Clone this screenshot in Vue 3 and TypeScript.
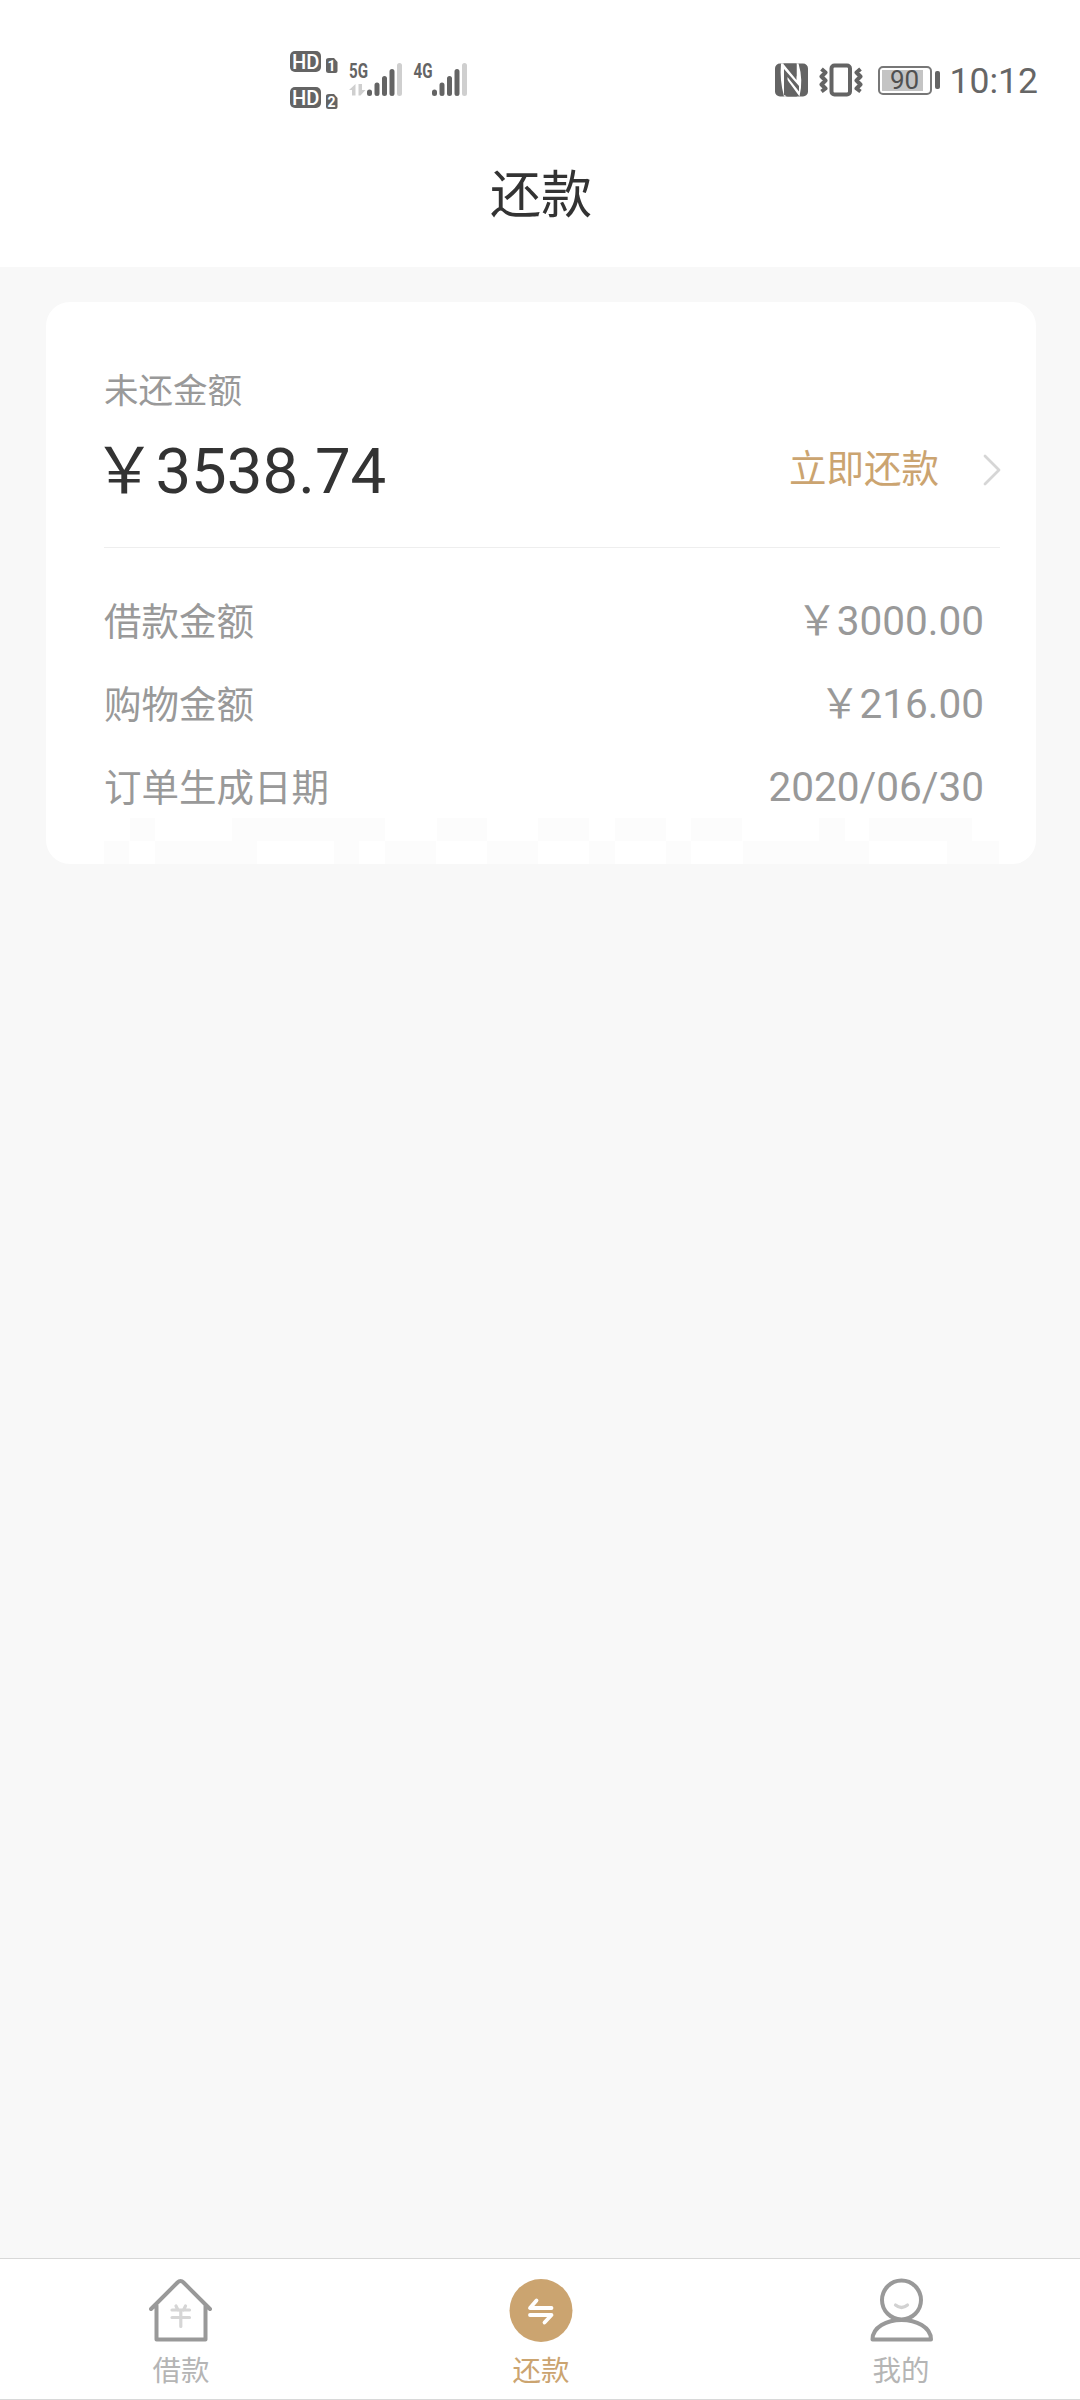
<script setup lang="ts">
interface Row { label: string; value: string; money: boolean }

const rows: Row[] = [
  { label: '借款金额', value: '3000.00', money: true },
  { label: '购物金额', value: '216.00', money: true },
  { label: '订单生成日期', value: '2020/06/30', money: false },
]

// faint mosaic cells: [x, row, width], relative to the mosaic strip
const tiles: number[][] = [
  [26, 0, 25], [128, 0, 153], [333, 0, 50], [434, 0, 51], [511, 0, 51], [587, 0, 51], [715, 0, 26], [765, 0, 103],
  [0, 1, 25], [51, 1, 102], [230, 1, 25], [281, 1, 51], [383, 1, 51], [485, 1, 26], [562, 1, 25], [639, 1, 126], [843, 1, 52],
]
</script>

<template>
  <div class="screen">
    <header class="top">
      <div class="status">
        <svg class="net" width="200" height="80" viewBox="0 0 200 80">
          <g fill="#646464">
            <rect x="0" y="11" width="31" height="21" rx="5" />
            <rect x="0" y="47" width="31" height="21" rx="5" />
            <path d="M39 18h5l3.500 4v9q0 2-2 2h-7q-2.500 0-2.500-2V20q0-2 3-2z" />
            <path d="M39 54h5l3.500 4v9q0 2-2 2h-7q-2.500 0-2.500-2V56q0-2 3-2z" />
          </g>
          <g fill="#fff" font-family="Roboto, sans-serif" font-weight="500">
            <text x="2" y="28.500" font-size="20" textLength="27.500" lengthAdjust="spacingAndGlyphs">HD</text>
            <text x="2" y="64.500" font-size="20" textLength="27.500" lengthAdjust="spacingAndGlyphs">HD</text>
            <text x="37.500" y="31" font-size="14" font-weight="700">1</text>
            <text x="37.500" y="67" font-size="14" font-weight="700">2</text>
          </g>
          <g fill="#646464" font-family="Roboto, sans-serif" font-weight="700" font-size="20">
            <text x="59" y="37.500" textLength="19" lengthAdjust="spacingAndGlyphs">5G</text>
            <text x="123.500" y="37.500" textLength="19" lengthAdjust="spacingAndGlyphs">4G</text>
          </g>
          <path d="M65.500 44v11.500h-3.500V50h-3zM68.500 44H72v6h3.500l-5 5.500h-2z" fill="#cfcfcf" />
          <g stroke-width="5" stroke-linecap="round">
            <path d="M79.500 52v1.500M87 45v8.500M94.500 38.500v15M102 31.500v22M144.500 52v1.500M152 45v8.500M159.500 38.500v15M167 31.500v22" stroke="#646464" />
            <path d="M109.500 25.500v28M174.500 25.500v28" stroke="#cfcfcf" />
          </g>
        </svg>
        <div class="system">
          <svg width="88" height="34" viewBox="0 0 88 34">
            <rect x="0" y="0.500" width="33" height="33" rx="5" fill="#646464" />
            <path d="M6 0.500Q4.500 17 9 33.500H11V15L24.500 33.500Q28.500 17 23.500 0.500H21.500V17L8 0.500Z" fill="#fff" />
            <path d="M8.500 0.500H21.500V13.500L8.500 0.500M9 6L24 23V28.500L12.500 14V33.500L9 32Z" fill="#646464" />
            <path d="M12.500 20.500V33.500H22Z" fill="#646464" />
            <rect x="56.500" y="2.500" width="18.500" height="29" rx="3" fill="none" stroke="#646464" stroke-width="4" />
            <path d="M46.500 6l4 3.500-4 4 4 4-4 4 4 4-4 3M85.500 6l-4 3.500 4 4-4 4 4 4-4 4 4 3" fill="none" stroke="#646464" stroke-width="4" stroke-linejoin="round" />
          </svg>
          <div class="battery"><span class="charge"></span><b>90</b></div>
          <i class="cap"></i>
          <span class="clock">10:12</span>
        </div>
      </div>
      <h1>还款</h1>
    </header>

    <main>
      <section class="card">
        <p class="caption">未还金额</p>
        <div class="summary">
          <strong class="total"><span class="yen">￥</span>3538.74</strong>
          <span class="pay">立即还款</span>
          <svg width="18" height="32" viewBox="0 0 18 32"><path d="M2 2l14 14L2 30" fill="none" stroke="#d6d6d6" stroke-width="2.800" stroke-linecap="round" stroke-linejoin="round" /></svg>
        </div>
        <div class="rule"></div>
        <dl>
          <div v-for="r in rows" :key="r.label" class="row">
            <dt>{{ r.label }}</dt>
            <dd><span v-if="r.money" class="yen">￥</span>{{ r.value }}</dd>
          </div>
        </dl>
        <svg class="mosaic" width="895" height="46" viewBox="0 0 895 46">
          <rect v-for="(t, i) in tiles" :key="i" :x="t[0]" :y="t[1] * 23" :width="t[2]" height="23" fill="#fcfcfc" />
        </svg>
      </section>
    </main>

    <nav>
      <div class="tab">
        <svg width="64" height="64" viewBox="0 0 64 64" fill="none" stroke-linecap="round" stroke-linejoin="round">
          <path d="M2 31L28.500 4.500q3-3 6 0L61 31M7.500 27.500V61.500h49V27.500" stroke="#999" stroke-width="4" />
          <path d="M23 32h17.500M23 39.500h17.500M31.800 32v16.500M27 28l2 4M36.500 28l-2 4" stroke="#d6d6d6" stroke-width="3.200" />
        </svg>
        <span>借款</span>
      </div>
      <div class="tab active">
        <svg width="64" height="64" viewBox="0 0 64 64" fill="none" stroke-linecap="round" stroke-linejoin="round">
          <circle cx="32" cy="32.500" r="31.500" fill="#cba470" />
          <path d="M27.500 22.500l-6.500 7.500H42.500M21 37H42.500l-7 7.500" stroke="#fff" stroke-width="3.800" />
        </svg>
        <span>还款</span>
      </div>
      <div class="tab">
        <svg width="64" height="64" viewBox="0 0 64 64" fill="none" stroke-linecap="round" stroke-linejoin="round">
          <circle cx="32.500" cy="22" r="19.500" stroke="#999" stroke-width="4" />
          <path d="M3.500 61.500C3.500 49 18 42 32.500 42S62 49 62 61.500Z" stroke="#999" stroke-width="4" />
          <path d="M26.500 27q6 5 12 0" stroke="#d2d2d2" stroke-width="3.200" />
        </svg>
        <span>我的</span>
      </div>
    </nav>
  </div>
</template>

<style>
body { margin: 0; }
</style>

<style scoped>
.screen { width: 1080px; height: 2400px; display: flex; flex-direction: column; background: #f8f8f8; font-family: Roboto, "Noto Sans CJK SC", sans-serif; overflow: hidden; }
.top { height: 267px; background: #fff; display: flex; flex-direction: column; }
.status { display: flex; justify-content: space-between; height: 120px; padding: 40px 42px 0 290px; box-sizing: border-box; }
.system { display: flex; align-items: center; height: 80px; }
.system svg { margin-right: 15px; }
.battery { width: 54px; height: 29px; box-sizing: border-box; border: 2px solid #777; border-radius: 5px; padding: 2px; display: grid; }
.charge { grid-area: 1 / 1; width: 41px; background: #c4c4c4; }
.battery b { grid-area: 1 / 1; font-size: 26px; line-height: 21px; font-weight: 400; color: #505050; text-align: center; }
.cap { width: 5px; height: 18px; border-radius: 2px; background: #646464; margin: 0 10px 0 3px; }
.clock { font-size: 35.500px; color: #666; padding-top: 2px; }
h1 { margin: 39px 0 0; padding-left: 2px; font-size: 51px; line-height: 74px; font-weight: 400; text-align: center; color: #333; }
main { flex: 1; padding: 35px 44px 0 46px; }
.card { height: 562px; background: #fff; border-radius: 24px; box-sizing: border-box; padding: 64px 35px 0 58px; display: flex; flex-direction: column; overflow: hidden; }
.caption { margin: 0; font-size: 34.500px; line-height: 50px; color: #999; }
.summary { height: 108px; display: flex; align-items: center; }
.total { font-size: 63.500px; line-height: 76px; font-weight: 400; color: #333; flex: 1; padding-top: 3px; }
.yen { display: inline-block; width: 0.810em; height: 1em; line-height: 1em; text-indent: -0.180em; white-space: nowrap; font-family: "Noto Sans CJK SC", sans-serif; }
.pay { color: #cba470; font-size: 37.500px; margin: 0 44px 10px 0; }
.rule { height: 1px; background: #eee; margin: 23px 1px 0 0; }
dl { margin: 30px 17px 0 0; }
.row { height: 83px; display: flex; justify-content: space-between; align-items: center; color: #999; }
dt { font-size: 37.500px; padding-bottom: 3px; }
dd { margin: 0; font-size: 40.500px; line-height: 48px; padding-top: 3px; }
.mosaic { flex: none; margin-top: -9px; }
nav { height: 142px; box-sizing: border-box; background: #fff; border-top: 1px solid #d8d8d8; border-bottom: 1px solid #d8d8d8; display: flex; padding-left: 1px; }
.tab { flex: none; width: 360px; display: flex; flex-direction: column; align-items: center; padding-top: 19px; font-size: 28.500px; line-height: 42px; color: #b5b5b5; }
.tab span { margin-top: 9px; }
.active { color: #cba470; }
</style>
